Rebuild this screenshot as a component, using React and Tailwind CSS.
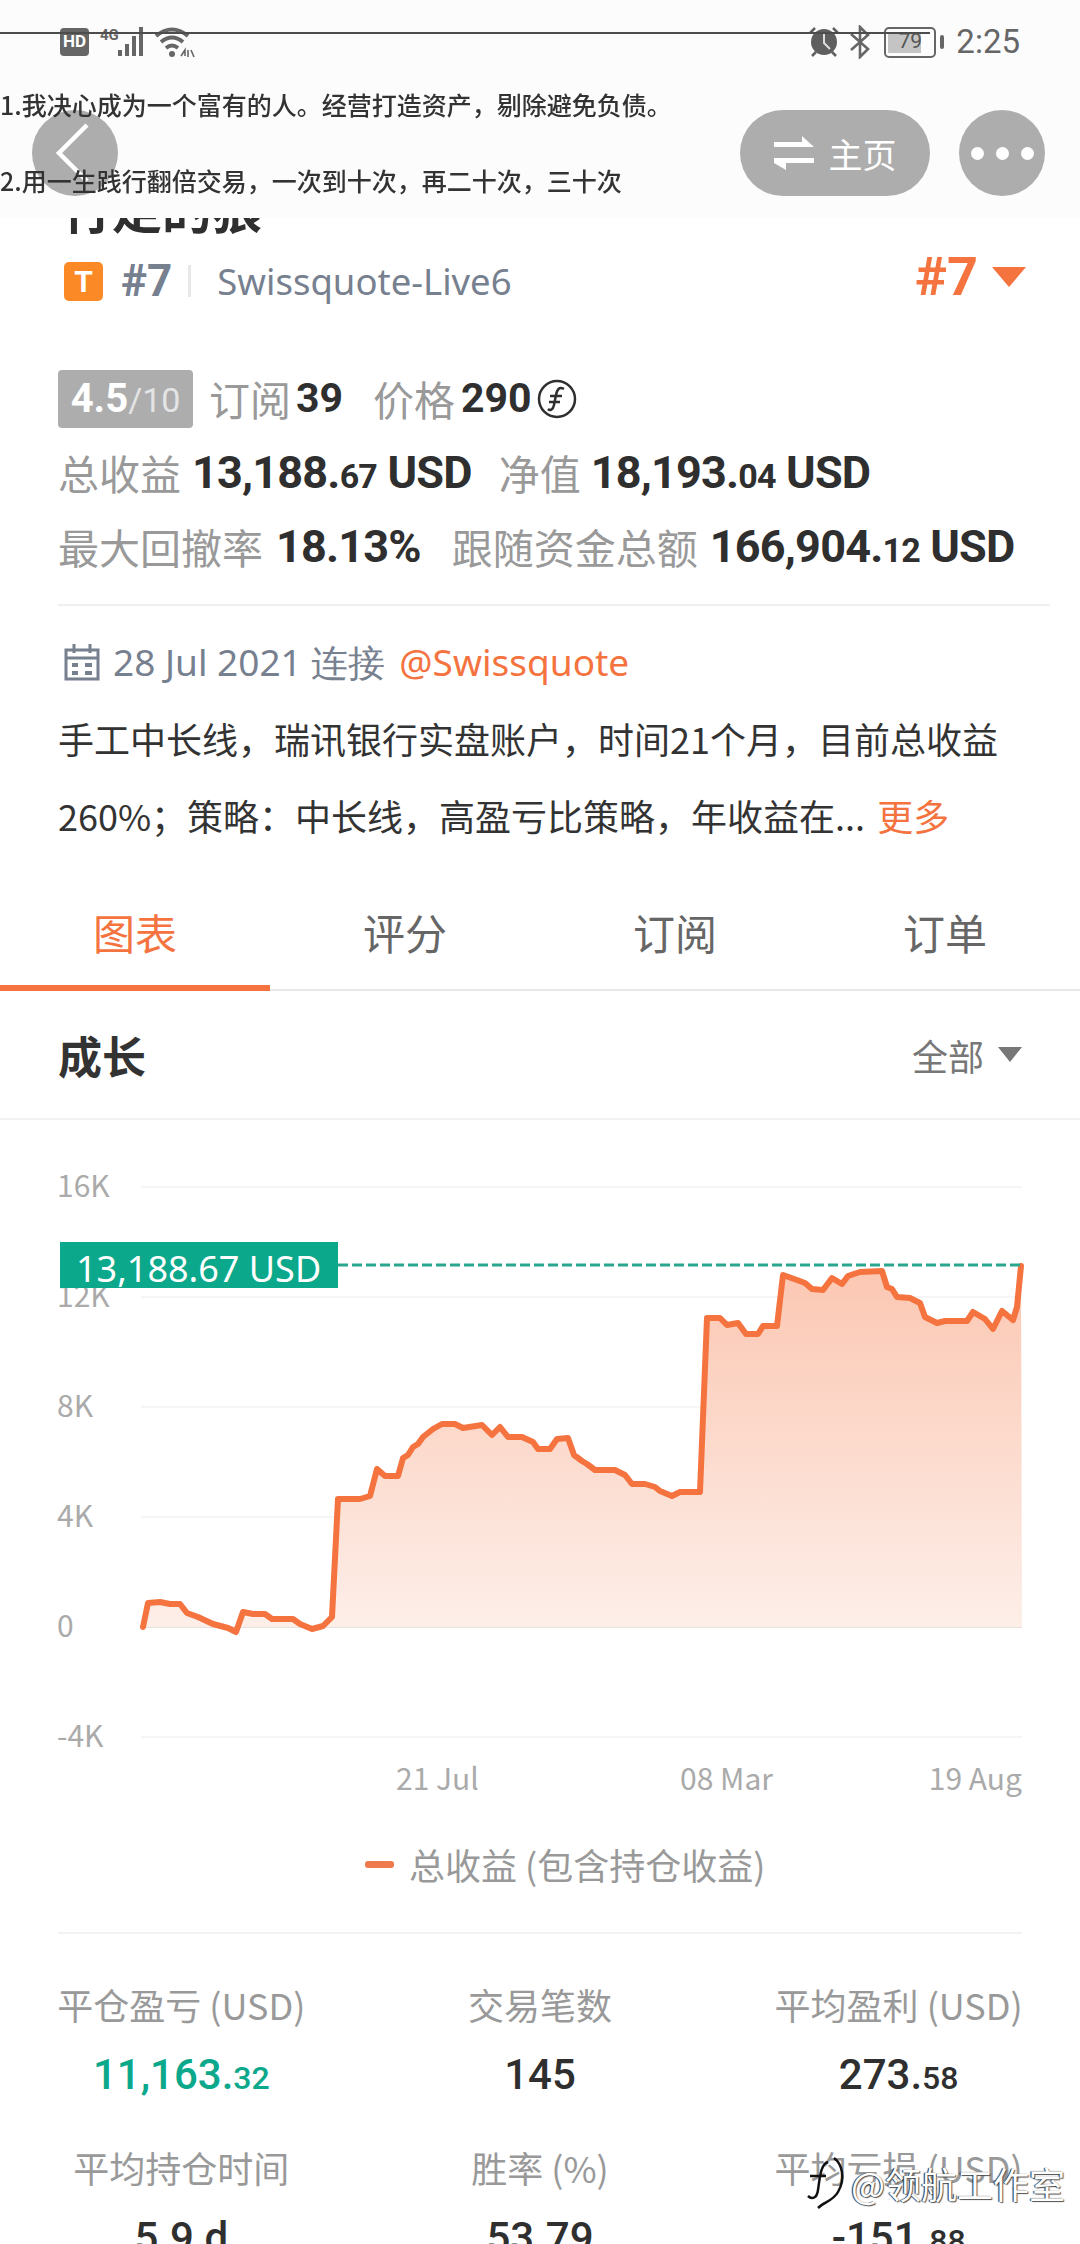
const sans = "font-['Noto_Sans_CJK_SC','Noto_Sans',sans-serif]";
const din = "font-['Roboto','Noto_Sans_CJK_SC',sans-serif]";

const linePoints = [
  [143, 1627], [148, 1603], [160, 1602], [170, 1604], [180, 1604], [187, 1613], [198, 1617], [213, 1624], [228, 1628], [236, 1632],
  [243, 1612], [253, 1614], [265, 1614], [272, 1619], [293, 1619], [300, 1624], [312, 1629], [323, 1626], [332, 1617], [338, 1499],
  [360, 1499], [370, 1496], [377, 1469], [385, 1476], [398, 1476], [403, 1458], [408, 1455], [413, 1447], [418, 1444], [423, 1437],
  [428, 1433], [433, 1429], [442, 1424], [455, 1424], [463, 1428], [482, 1425], [492, 1435], [500, 1427], [508, 1437], [522, 1437],
  [533, 1442], [538, 1449], [550, 1449], [557, 1439], [568, 1438], [574, 1455], [582, 1461], [587, 1464], [595, 1470], [615, 1470],
  [625, 1475], [632, 1484], [645, 1484], [655, 1487], [660, 1491], [672, 1496], [680, 1492], [700, 1492], [707, 1318], [720, 1318],
  [727, 1325], [738, 1323], [746, 1334], [758, 1334], [763, 1326], [777, 1326], [783, 1275], [797, 1280], [805, 1283], [812, 1289],
  [823, 1290], [832, 1278], [842, 1284], [848, 1276], [860, 1272], [882, 1271], [887, 1287], [892, 1289], [897, 1297], [910, 1298],
  [920, 1303], [925, 1317], [937, 1323], [945, 1321], [967, 1321], [973, 1312], [985, 1319], [993, 1329], [1002, 1311], [1013, 1320],
  [1017, 1307], [1021, 1266],
];
const linePath = linePoints.map((p, i) => (i === 0 ? "M" : "L") + p[0] + " " + p[1]).join(" ");
const areaPath = linePath + " L1022 1627 L143 1627 Z";
const gridLines = [
  { label: "16K", y: 1187 },
  { label: "12K", y: 1297 },
  { label: "8K", y: 1407 },
  { label: "4K", y: 1517 },
  { label: "0", y: 1627 },
  { label: "-4K", y: 1737 },
];

function Money({ whole, cents, unit, className = "" }) {
  return (
    <span className={`${din} font-bold text-[#2f2f2f] text-[45px] tracking-[-0.8px] whitespace-nowrap ${className}`}>
      {whole}
      <span className="text-[34px]">{cents}</span>
      {unit && <span> {unit}</span>}
    </span>
  );
}

function Label({ children, className = "" }) {
  return <span className={`text-[#999999] text-[41px] whitespace-nowrap ${className}`}>{children}</span>;
}

function StatusBar() {
  return (
    <div className="flex items-center justify-between h-[56px] pl-[60px] pr-[60px]">
      <div className="flex items-center">
        <div className={`w-[29px] h-[28px] rounded-[4px] bg-[#666666] text-white text-[17px] font-bold flex items-center justify-center ${din}`}>HD</div>
        <svg width="120" height="34" viewBox="0 0 120 34" className="ml-[11px]">
          <text x="0" y="15" fontSize="15" fontWeight="700" fill="#666" fontFamily="Roboto">4G</text>
          <g fill="#666">
            <rect x="18" y="25" width="4" height="6" />
            <rect x="25" y="19" width="4" height="12" />
            <rect x="32" y="11" width="4" height="20" />
            <rect x="39" y="2" width="4" height="29" />
          </g>
          <g fill="none" stroke="#666" strokeWidth="4">
            <path d="M56 11 Q72 -2 88 11" />
            <path d="M61 17 Q72 8 83 17" />
            <path d="M66 23 Q72 18 78 23" />
          </g>
          <circle cx="72" cy="29" r="3" fill="#666" />
          <path d="M81 31 L85 25 V31 M88 25 V32 M91 25 L94 32" stroke="#666" strokeWidth="1.6" fill="none" />
        </svg>
      </div>
      <div className="flex items-center">
        <svg width="32" height="32" viewBox="0 0 32 32">
          <circle cx="16" cy="16" r="13" fill="#5f5f5f" />
          <path d="M16 8 V17 L22 23" stroke="#ddd" strokeWidth="2" fill="none" />
          <path d="M2 7 L7 2 M25 2 L30 7 M4 30 L8 26 M28 30 L24 26" stroke="#5f5f5f" strokeWidth="2.5" />
        </svg>
        <svg width="22" height="34" viewBox="0 0 22 34" className="ml-[9px]">
          <path d="M2 9 L19 24 L11 32 V2 L19 10 L2 25" stroke="#666" strokeWidth="2.6" fill="none" />
        </svg>
        <div className="relative ml-[13px] w-[52px] h-[31px] rounded-[5px] border-2 border-[#666666] flex items-center">
          <div className="absolute left-[2px] top-[3px] bottom-[3px] w-[33px] bg-[#c4c4c4]" />
          <span className={`relative w-full text-center text-[21px] text-[#555555] ${din}`}>79</span>
        </div>
        <div className="ml-[4px] w-[4px] h-[14px] rounded-[2px] bg-[#666666]" />
        <span className={`ml-[12px] text-[33px] text-[#666666] ${din}`}>2:25</span>
      </div>
    </div>
  );
}

function Header() {
  return (
    <div className="relative h-[218px] pt-[14px] bg-[#fcfcfc]">
      <StatusBar />

      <button className="absolute left-[32px] top-[110px] w-[86px] h-[86px] rounded-full bg-[#adadad] flex items-center justify-center">
        <svg width="40" height="62" viewBox="0 0 40 62">
          <path d="M32 3 L4 31 L32 59" stroke="white" strokeWidth="4.5" fill="none" />
        </svg>
      </button>
      <button className="absolute left-[740px] top-[110px] w-[190px] h-[86px] rounded-full bg-[#adadad] flex items-center justify-center gap-[15px] text-white text-[34px]">
        <svg width="40" height="34" viewBox="0 0 40 34">
          <path d="M0 6 H28 V0 L40 11 H0 Z" fill="white" />
          <path d="M0 22 H40 V27 H12 V34 L0 27 Z" fill="white" />
        </svg>
        <span>主页</span>
      </button>
      <button className="absolute left-[959px] top-[110px] w-[86px] h-[86px] rounded-full bg-[#adadad] flex items-center justify-center gap-[12px]">
        <span className="w-[13px] h-[13px] rounded-full bg-white" />
        <span className="w-[13px] h-[13px] rounded-full bg-white" />
        <span className="w-[13px] h-[13px] rounded-full bg-white" />
      </button>

      {/* these two lines sit on top of the back button in the picture */}
      <div className="relative pointer-events-none blur-[0.5px] text-[25px] font-medium text-[#333333] whitespace-nowrap">
        <p className="mt-[17px] leading-[34px]">1.我决心成为一个富有的人。经营打造资产，剔除避免负债。</p>
        <p className="mt-[42px] leading-[34px]">2.用一生践行翻倍交易，一次到十次，再二十次，三十次</p>
      </div>

      {/* line burned across the status bar */}
      <div className="absolute left-0 top-[32px] w-[930px] h-[2px] bg-[#4d4d4d]" />
    </div>
  );
}

function Profile() {
  return (
    <div>
      <div className="h-[16px] overflow-hidden pl-[62px]">
        <p className="-mt-[43px] text-[50px] leading-[64px] font-bold text-[#2f2f2f]">行走的狼</p>
      </div>

      <div className="flex items-center justify-between h-[76px] mt-[9px] pl-[64px] pr-[54px]">
        <div className="flex items-center">
          <div className={`w-[39px] h-[39px] rounded-[5px] bg-[#fb8a26] text-white text-[30px] font-bold flex items-center justify-center ${din}`}>T</div>
          <span className={`ml-[18px] text-[#76808f] text-[44px] font-bold ${din}`}>#7</span>
          <div className="ml-[16px] w-[3px] h-[32px] bg-[#e8e8e8]" />
          <span className="ml-[26px] text-[#76808f] text-[36.5px] font-['Noto_Sans',sans-serif]">Swissquote-Live6</span>
        </div>
        <div className="flex items-center -mt-[9px]">
          <span className={`text-[#f4733f] text-[54px] font-bold ${din}`}>#7</span>
          <div className="ml-[14px] w-0 h-0 border-l-[17px] border-r-[17px] border-t-[20px] border-l-transparent border-r-transparent border-t-[#f4733f]" />
        </div>
      </div>

      <div className="mt-[43px] pl-[58px]">
        <div className="flex items-center h-[74px]">
          <div className={`w-[135px] h-[58px] rounded-[4px] bg-[#adadad] flex items-baseline justify-center font-bold text-white text-[40px] leading-[58px] ${din}`}>
            4.5<span className="font-normal text-[#e4e4e4] text-[34px]">/10</span>
          </div>
          <Label className="ml-[16px]">订阅</Label>
          <span className={`ml-[5px] text-[41px] font-bold text-[#2f2f2f] ${din}`}>39</span>
          <Label className="ml-[30px]">价格</Label>
          <span className={`ml-[6px] text-[41px] font-bold text-[#2f2f2f] ${din}`}>290</span>
          <svg width="40" height="40" viewBox="0 0 40 40" className="ml-[5px]">
            <circle cx="20" cy="20" r="18" stroke="#2f2f2f" strokeWidth="2.5" fill="none" />
            <path d="M27 10 C22 7 20 11 19 16 L17 26 C16 31 13 32 11 30 M13 17 H25 M12 23 H23" stroke="#2f2f2f" strokeWidth="2.5" fill="none" />
          </svg>
        </div>
        <div className="flex items-center h-[74px]">
          <Label>总收益</Label>
          <Money whole="13,188." cents="67" unit="USD" className="ml-[11px]" />
          <Label className="ml-[27px]">净值</Label>
          <Money whole="18,193." cents="04" unit="USD" className="ml-[10px]" />
        </div>
        <div className="flex items-center h-[74px]">
          <Label>最大回撤率</Label>
          <Money whole="18.13%" className="ml-[13px]" />
          <Label className="ml-[31px]">跟随资金总额</Label>
          <Money whole="166,904." cents="12" unit="USD" className="ml-[12px]" />
        </div>
      </div>

      <div className="mt-[20px] ml-[58px] w-[992px] h-[2px] bg-[#f0f0f0]" />

      <div className="flex items-center h-[60px] mt-[26px] pl-[64px] text-[37px] text-[#76808f] whitespace-nowrap">
        <svg width="36" height="38" viewBox="0 0 36 38">
          <path d="M2 7 H34 V36 H2 Z M2 15 H34 M10 1 V10 M26 1 V10" stroke="#76808f" strokeWidth="3" fill="none" />
          <path d="M8 20 H14 V24 H8 Z M8 28 H14 V32 H8 Z M21 20 H28 V24 H21 Z M21 28 H28 V32 H21 Z" fill="#76808f" />
        </svg>
        <span className="ml-[13px] font-['Noto_Sans',sans-serif]">28 Jul 2021 连接</span>
        <span className="ml-[14px] text-[#f4733f] font-['Noto_Sans',sans-serif]">@Swissquote</span>
      </div>

      <div className="mt-[8px] pl-[58px] text-[36px] leading-[77px] text-[#333333] whitespace-nowrap">
        <p>手工中长线，瑞讯银行实盘账户，时间21个月，目前总收益</p>
        <p>
          260%；策略：中长线，高盈亏比策略，年收益在...
          <span className="ml-[12px] text-[#f4733f]">更多</span>
        </p>
      </div>
    </div>
  );
}

function Tabs() {
  const tabs = ["图表", "评分", "订阅", "订单"];
  return (
    <div className="mt-[44px] grid grid-cols-4 border-b-2 border-[#e8e8e8] text-[42px]">
      {tabs.map((tab, i) => (
        <div
          key={tab}
          className={`h-[93px] -mb-[2px] flex items-center justify-center ${i === 0 ? "pb-[20px] text-[#f4733f] border-b-[6px] border-[#f4733f]" : "pb-[26px] text-[#666666]"}`}
        >
          {tab}
        </div>
      ))}
    </div>
  );
}

function Chart() {
  const labelStyle = "fill-[#aaaaaa] text-[30px]";
  return (
    <div className="relative h-[690px]">
      <svg width="1080" height="690" viewBox="0 1120 1080 690" className={`block ${sans}`}>
        <defs>
          <linearGradient id="growthFill" x1="0" y1="0" x2="0" y2="1">
            <stop offset="0" stopColor="#fbc4ae" />
            <stop offset="1" stopColor="#fdeee8" />
          </linearGradient>
        </defs>
        {gridLines.map((g) => (
          <g key={g.label}>
            <line x1="141" x2="1022" y1={g.y} y2={g.y} stroke={g.label === "0" ? "#e8e2e0" : "#f5f5f5"} strokeWidth="2" />
            <text x="57" y={g.y + 10} className={labelStyle}>{g.label}</text>
          </g>
        ))}
        <path d={areaPath} fill="url(#growthFill)" fillOpacity="0.95" />
        <path d={linePath} fill="none" stroke="#f4733f" strokeWidth="6" strokeLinejoin="round" strokeLinecap="round" />
        <line x1="338" x2="1022" y1="1265" y2="1265" stroke="#2aa58f" strokeWidth="3" strokeDasharray="10 4" />
        <text x="396" y="1790" className={labelStyle}>21 Jul</text>
        <text x="680" y="1790" className={labelStyle}>08 Mar</text>
        <text x="1022" y="1790" textAnchor="end" className={labelStyle}>19 Aug</text>
      </svg>
      <div className="absolute left-[60px] top-[122px] w-[278px] h-[46px] bg-[#0ba88b] text-white text-[36px] leading-[54px] pl-[16px] font-['Noto_Sans',sans-serif] whitespace-nowrap">
        13,188.67 USD
      </div>
    </div>
  );
}

function Stat({ label, value, cents, tone = "text-[#2f2f2f]" }) {
  return (
    <div className="flex flex-col items-center">
      <span className="text-[36px] leading-[50px] text-[#999999] whitespace-nowrap">{label}</span>
      <span className={`mt-[21px] text-[42px] leading-[50px] font-medium ${din} ${tone}`}>
        {value}
        <span className="text-[32px]">{cents}</span>
      </span>
    </div>
  );
}

function Stats() {
  return (
    <div className="mt-[45px] grid grid-cols-3 gap-y-[39px] px-[2px]">
      <Stat label="平仓盈亏 (USD)" value="11,163." cents="32" tone="text-[#0ba88b]" />
      <Stat label="交易笔数" value="145" />
      <Stat label="平均盈利 (USD)" value="273." cents="58" />
      <Stat label="平均持仓时间" value="5.9 d" />
      <Stat label="胜率 (%)" value="53.79" />
      <Stat label="平均亏损 (USD)" value="-151." cents="88" />
    </div>
  );
}

export default function App() {
  return (
    <div className={`relative w-[1080px] h-[2244px] overflow-hidden bg-white ${sans}`}>
      <Header />
      <Profile />
      <Tabs />

      <div className="flex items-center justify-between h-[129px] border-b-2 border-[#f2f2f2] pl-[58px] pr-[58px]">
        <span className="text-[44px] font-bold text-[#333333]">成长</span>
        <div className="flex items-center">
          <span className="text-[36px] text-[#777777]">全部</span>
          <div className="ml-[14px] w-0 h-0 border-l-[12px] border-r-[12px] border-t-[15px] border-l-transparent border-r-transparent border-t-[#777777]" />
        </div>
      </div>

      <Chart />

      <div className="flex items-center h-[60px] mt-[24px] pl-[365px] text-[36px] text-[#999999]">
        <div className="w-[29px] h-[7px] rounded-[3px] bg-[#ee7a4e]" />
        <span className="ml-[15px]">总收益 (包含持仓收益)</span>
      </div>

      <div className="mt-[38px] mx-[58px] h-[2px] bg-[#f2f2f2]" />

      <Stats />

      {/* watermark stamped on the screenshot */}
      <div className="absolute left-[806px] top-[2154px] flex items-center text-white text-[36px] whitespace-nowrap [text-shadow:-1px_0_1px_#222,1px_1px_1px_#555]">
        <svg width="42" height="58" viewBox="0 0 42 58">
          <path d="M28 4 C36 10 40 24 32 38 C27 47 18 48 12 54 M22 8 C15 10 14 22 12 36 C11 44 6 46 2 42 M4 22 H20" stroke="#111" strokeWidth="2.5" fill="none" />
        </svg>
        <span className="ml-[3px]">@领航工作室</span>
      </div>
    </div>
  );
}
